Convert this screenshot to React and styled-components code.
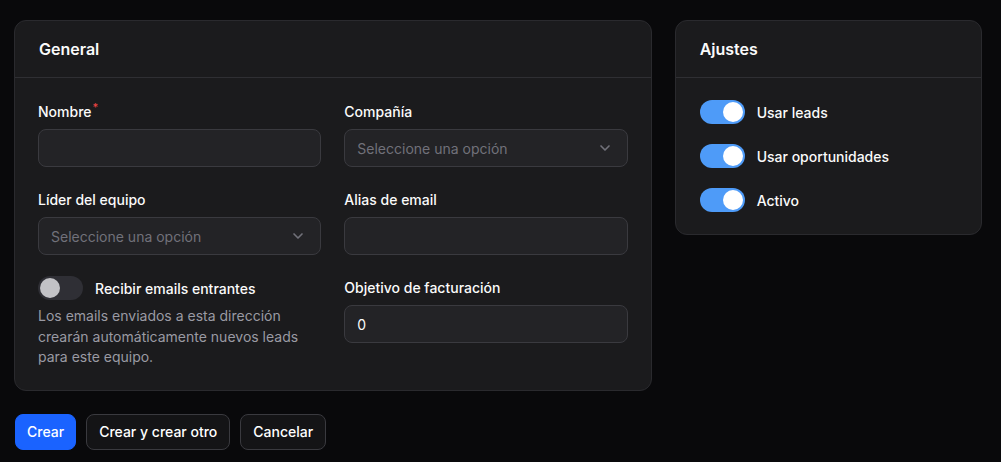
import React from 'react';
import styled, { createGlobalStyle } from 'styled-components';

const GlobalStyle = createGlobalStyle`
	html, body {
		margin: 0;
		padding: 0;
		background: #09090b;
	}
	body {
		font-family: Inter, 'Noto Sans', sans-serif;
		color: #fafafa;
		-webkit-font-smoothing: antialiased;
	}
	* {
		box-sizing: border-box;
	}
`;

const Toggle = ({ on }) => (
	<Track on={on ? 1 : 0}>
		<Knob on={on ? 1 : 0} />
	</Track>
);

const Chevron = () => (
	<svg width="16" height="16" viewBox="0 0 24 24" fill="none" stroke="#71717a" strokeWidth="2.5" strokeLinecap="round" strokeLinejoin="round">
		<path d="m6 9 6 6 6-6" />
	</svg>
);

export default function App() {
	const settings = ['Usar leads', 'Usar oportunidades', 'Activo'];

	return (
		<Page>
			<GlobalStyle />
			<Columns>
				<Card>
					<CardHeader>General</CardHeader>
					<CardBody>
						<FormGrid>
							<Field>
								<Label>
									Nombre<Required>*</Required>
								</Label>
								<Input />
							</Field>
							<Field>
								<Label>Compañía</Label>
								<Select>
									<Placeholder>Seleccione una opción</Placeholder>
									<Chevron />
								</Select>
							</Field>
							<Field>
								<Label>Líder del equipo</Label>
								<Select>
									<Placeholder>Seleccione una opción</Placeholder>
									<Chevron />
								</Select>
							</Field>
							<Field>
								<Label>Alias de email</Label>
								<Input />
							</Field>
							<Field>
								<ToggleRow compact>
									<Toggle on={false} />
									<ToggleLabel>Recibir emails entrantes</ToggleLabel>
								</ToggleRow>
								<Help>
									Los emails enviados a esta dirección crearán automáticamente nuevos leads para este equipo.
								</Help>
							</Field>
							<Field>
								<Label>Objetivo de facturación</Label>
								<Input>0</Input>
							</Field>
						</FormGrid>
					</CardBody>
				</Card>

				<SideCard>
					<CardHeader>Ajustes</CardHeader>
					<SettingsList>
						{settings.map((s) => (
							<ToggleRow key={s}>
								<Toggle on />
								<ToggleLabel>{s}</ToggleLabel>
							</ToggleRow>
						))}
					</SettingsList>
				</SideCard>
			</Columns>

			<Actions>
				<Button primary>Crear</Button>
				<Button>Crear y crear otro</Button>
				<Button>Cancelar</Button>
			</Actions>
		</Page>
	);
}

const Page = styled.div`
	padding: 20px 19px 12px 14px;
	display: flex;
	flex-direction: column;
	gap: 23px;
	min-height: 462px;
`;

const Columns = styled.div`
	display: flex;
	align-items: flex-start;
	gap: 23px;
`;

const Card = styled.div`
	width: 639px;
	background: #1b1b1d;
	border: 1px solid #2a2a2e;
	border-radius: 12px;
`;

const SideCard = styled(Card)`
	width: 308px;
`;

const CardHeader = styled.div`
	height: 57px;
	padding: 0 24px;
	display: flex;
	align-items: center;
	font-size: 16px;
	font-weight: 600;
	border-bottom: 1px solid #2f2f33;
`;

const CardBody = styled.div`
	padding: 24px 23px 22px 23px;
`;

const FormGrid = styled.div`
	display: grid;
	grid-template-columns: 1fr 1fr;
	column-gap: 23px;
	row-gap: 23px;
`;

const Field = styled.div`
	display: flex;
	flex-direction: column;
	gap: 7px;
`;

const Label = styled.div`
	font-size: 14px;
	line-height: 20px;
	font-weight: 500;
	color: #fafafa;
`;

const Required = styled.sup`
	color: #ef4444;
	font-size: 11px;
	line-height: 0;
	margin-left: 1px;
	vertical-align: 6px;
`;

const Input = styled.div`
	height: 38px;
	padding: 0 12px;
	display: flex;
	align-items: center;
	background: #232326;
	border: 1px solid #3a3a3f;
	border-radius: 8px;
	font-size: 14px;
	color: #fafafa;
`;

const Select = styled(Input)`
	justify-content: space-between;
	padding-right: 14px;
`;

const Placeholder = styled.span`
	color: #71717a;
`;

const ToggleRow = styled.div`
	display: flex;
	align-items: center;
	gap: 12px;
	height: ${(p) => (p.compact ? '20px' : '24px')};
`;

const Track = styled.div`
	width: 45px;
	height: 24px;
	border-radius: 12px;
	padding: 2px;
	display: flex;
	justify-content: ${(p) => (p.on ? 'flex-end' : 'flex-start')};
	background: ${(p) => (p.on ? '#4e9bf8' : '#2f2f35')};
	flex-shrink: 0;
`;

const Knob = styled.div`
	width: 20px;
	height: 20px;
	border-radius: 50%;
	background: ${(p) => (p.on ? '#ffffff' : '#c2c2c6')};
`;

const ToggleLabel = styled.span`
	font-size: 14px;
	font-weight: 500;
	color: #fafafa;
`;

const Help = styled.div`
	margin-top: 1px;
	font-size: 14px;
	line-height: 20.5px;
	color: #9a9aa3;
	padding-right: 14px;
`;

const SettingsList = styled.div`
	padding: 22px 24px 22px 24px;
	display: flex;
	flex-direction: column;
	gap: 20px;
`;

const Actions = styled.div`
	display: flex;
	gap: 10px;
	padding-left: 1px;
`;

const Button = styled.button`
	height: 36px;
	padding: 0 ${(p) => (p.primary ? '11px' : '12px')};
	border-radius: 8px;
	font-family: inherit;
	font-size: 14px;
	font-weight: 500;
	color: #ffffff;
	cursor: pointer;
	background: ${(p) => (p.primary ? '#1a63ff' : '#141416')};
	border: 1px solid ${(p) => (p.primary ? '#1a63ff' : '#3a3a3f')};
`;
